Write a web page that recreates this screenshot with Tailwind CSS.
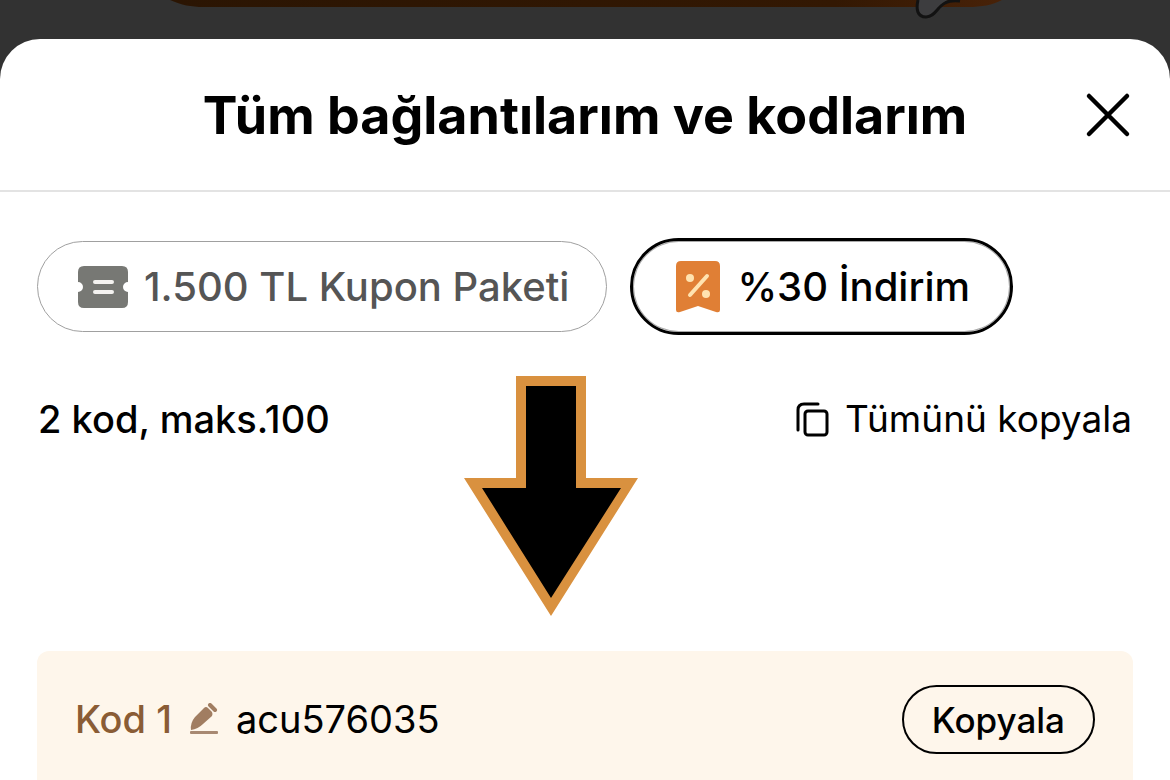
<!DOCTYPE html>
<html lang="tr">
<head>
<meta charset="utf-8">
<meta name="viewport" content="width=device-width, initial-scale=1">
<title>Tüm bağlantılarım ve kodlarım</title>
<script src="https://cdn.jsdelivr.net/npm/@tailwindcss/browser@4"></script>
</head>
<body class="flex h-screen flex-col overflow-hidden bg-[#323232] font-['Inter','Liberation_Sans',sans-serif] text-black">
<!-- dimmed page behind the sheet -->
<div class="flex h-[39px] shrink-0 justify-center" aria-hidden="true">
  <svg class="h-[39px] w-[850px]" viewBox="0 0 850 39" fill="none">
    <defs><linearGradient id="bar" x1="0" x2="1"><stop offset="0" stop-color="#2b1503"/><stop offset=".8" stop-color="#331803"/><stop offset="1" stop-color="#482208"/></linearGradient></defs>
    <path d="M10 0C22 5 30 7 44 7H808C822 7 832 5 842 0Z" fill="url(#bar)"/>
    <path d="M758 0C756 9 757 17 766 18C776 18 776 6 788 0Z" fill="#3d3d3f"/>
    <path d="M758 0C756 9 757 17 766 17C775 17 777 7 785 3Q790 0 800 1" stroke="#121212" stroke-width="3"/>
  </svg>
</div>
<main class="flex flex-1 flex-col rounded-t-[40px] bg-white">
  <header class="relative flex h-[153px] shrink-0 items-center justify-center border-b-2 border-[#e3e3e3]">
    <h1 class="pt-0.5 text-[52px] leading-[64px] font-bold">Tüm bağlantılarım ve kodlarım</h1>
    <button type="button" aria-label="Kapat" class="absolute right-[38px]">
      <svg class="size-12" viewBox="0 0 48 48" fill="none" stroke="#000" stroke-width="4.5" stroke-linecap="round"><path d="M5 5L43 43M43 5L5 43"/></svg>
    </button>
  </header>
  <div class="flex items-center gap-[23px] px-[37px] pt-[46px]">
    <button type="button" class="flex h-[91px] items-center gap-4 rounded-full border border-[#a0a0a0] pr-[37px] pl-10 text-[40px] leading-12 font-medium whitespace-nowrap text-[#555]">
      <svg class="h-[42px] w-[50px] shrink-0" viewBox="0 0 50 42"><path d="M6 0H44Q50 0 50 6V16A5 5 0 0 0 50 26V36Q50 42 44 42H6Q0 42 0 36V26A5 5 0 0 0 0 16V6Q0 0 6 0Z" fill="#777874"/><path d="M17 16H34M17 26H34" stroke="#f4f2f0" stroke-width="4" stroke-linecap="round"/></svg>
      1.500 TL Kupon Paketi
    </button>
    <button type="button" class="flex h-[97px] items-center gap-[17px] rounded-full border-3 border-black pr-10 pl-[43px] text-[40px] leading-12 font-medium whitespace-nowrap shadow-[inset_0_0_0_1px_#aaa]">
      <svg class="h-[52px] w-[44px] shrink-0" viewBox="0 0 44 52"><path d="M5 0H39Q44 0 44 5V49Q44 52 40 51L22 45L4 51Q0 52 0 49V5Q0 0 5 0Z" fill="#e07f35"/><path d="M14 34L31 15" stroke="#ffe3b0" stroke-width="4" stroke-linecap="round"/><circle cx="14" cy="17" r="4" fill="#ffe3b0"/><circle cx="30" cy="33" r="4" fill="#ffe3b0"/></svg>
      %30 İndirim
    </button>
  </div>
  <div class="flex items-center justify-between px-[38px] pt-[62px] leading-[44px]">
    <p class="text-[38px] font-medium">2 kod, maks.100</p>
    <button type="button" class="flex items-center gap-4 text-[37px]">
      <svg class="h-[36px] w-[33px]" viewBox="0 0 33 36" fill="none" stroke="#000" stroke-width="3" stroke-linecap="round"><path d="M2 29V9Q2 3 8 3H22"/><rect x="9" y="10" width="22" height="24" rx="3"/></svg>
      Tümünü kopyala
    </button>
  </div>
  <!-- arrow pointing at the first code, rising into the row above it -->
  <svg class="-mt-[65px] ml-[464px] h-[240px] w-[174px] shrink-0" viewBox="0 0 174 240" aria-hidden="true"><path d="M52 0H122V102H174L87 240L0 102H52Z" fill="#d9913f"/><path d="M62 10H112V112H157L87 222L18 112H62Z"/></svg>
  <section class="mx-[37px] mt-[35px] flex flex-1 items-start justify-between rounded-t-xl bg-[#fef6eb] px-[38px] pt-[34px] leading-[44px]">
    <div class="flex items-center pt-3 text-[38px]">
      <span class="font-medium text-[#8a5c35]">Kod 1</span>
      <button type="button" aria-label="Kodu düzenle" class="mx-[18px]">
        <svg class="h-8 w-7" viewBox="0 0 28 32"><path d="M1 27Q0 20 5 14L14 5Q16 3 18 5L22 9Q23 11 22 13L13 21Q8 26 1 27Z" fill="#a17d61"/><path d="M20 2L25 7" stroke="#a17d61" stroke-width="4" stroke-linecap="round"/><rect y="28" width="28" height="3" rx="1" fill="#a88972"/></svg>
      </button>
      <span>acu576035</span>
    </div>
    <button type="button" class="h-[69px] rounded-full border-2 border-black px-7 text-[35px] font-medium">Kopyala</button>
  </section>
</main>
</body>
</html>
